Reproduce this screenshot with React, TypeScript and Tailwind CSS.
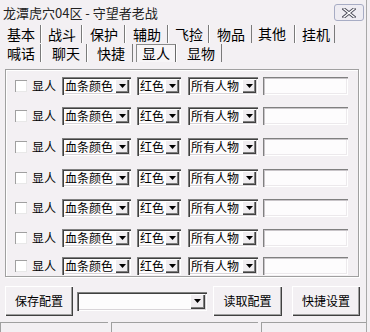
import React from "react";

const FONT = '"Noto Sans CJK SC", "Noto Sans", sans-serif';

function Arrow() {
  return (
    <svg width="7" height="4" viewBox="0 0 7 4">
      <path d="M0 0H7L3.5 4Z" fill="#000" />
    </svg>
  );
}

function Combo({ w, label }: { w: number; label: string }) {
  return (
    <div
      className="relative flex h-[18px] shrink-0 items-center bg-[#fdfcfd] shadow-[inset_1px_1px_0_#808080,inset_2px_2px_0_#404040,inset_-1px_-1px_0_#ffffff,inset_-2px_-2px_0_#d8d4d8]"
      style={{ width: w }}
    >
      <span className="pl-[3px] text-[12px] leading-[14px] text-black">{label}</span>
      <div className="absolute right-[2px] top-[2px] flex h-[14px] w-[14px] items-center justify-center bg-[#f0edf0] shadow-[inset_1px_1px_0_#ffffff,inset_-1px_-1px_0_#404040,inset_-2px_-2px_0_#808080]">
        <Arrow />
      </div>
    </div>
  );
}

function Row({ mt }: { mt: string }) {
  return (
    <div className={`flex h-[18px] items-center ${mt}`}>
      <div className="ml-[9px] h-[12px] w-[12px] shrink-0 bg-white shadow-[inset_1px_1px_0_#a0a0a0,inset_-1px_-1px_0_#e8e8e8]" />
      <span className="ml-[5px] w-[30px] text-[12px] leading-[14px] text-black">显人</span>
      <Combo w={69} label="血条颜色" />
      <div className="w-[6px]" />
      <Combo w={44} label="红色" />
      <div className="w-[7px]" />
      <Combo w={70} label="所有人物" />
      <div className="w-[5px]" />
      <div className="h-[18px] w-[85px] shrink-0 bg-[#fdfcfd] shadow-[inset_1px_1px_0_#808080,inset_2px_2px_0_#c8c4c8,inset_-1px_-1px_0_#ffffff,inset_-2px_-2px_0_#ece9ec]" />
    </div>
  );
}

function Tab({ label, w, pl, first }: { label: string; w: number; pl: number; first?: boolean }) {
  return (
    <div
      className={`flex h-full shrink-0 items-center border-r border-r-[#7a7a7a] text-[14px] leading-[16px] text-black ${first ? "" : "border-l border-l-white"}`}
      style={{ width: w, paddingLeft: pl }}
    >
      {label}
    </div>
  );
}

function Button({ label, w }: { label: string; w: number }) {
  return (
    <div
      className="flex h-[30px] shrink-0 items-center justify-center bg-[#f3f0f3] text-[12px] text-black shadow-[inset_1px_1px_0_#ffffff,inset_-1px_-1px_0_#404040,inset_-2px_-2px_0_#a0a0a0]"
      style={{ width: w }}
    >
      {label}
    </div>
  );
}

export default function App() {
  const rowMargins = ["mt-0", "mt-[12px]", "mt-[13px]", "mt-[13px]", "mt-[12px]", "mt-[12px]", "mt-[10px]"];
  return (
    <div
      className="relative h-[332px] w-[370px] overflow-hidden bg-[#f3f0f3]"
      style={{ fontFamily: FONT }}
    >
      <div className="flex h-[332px] w-[367px] flex-col border-r border-r-[#a8a8a8]">
        {/* Title bar */}
        <div className="flex h-[26px] items-center justify-between pl-[3px] pr-[2px]">
          <span className="text-[13px] leading-[16px] text-[#222]">龙潭虎穴04区 - 守望者老战</span>
          <div className="flex h-[17px] w-[30px] items-center justify-center rounded-[3px] border border-[#a7acc4] bg-[#eeecf2]">
            <svg width="14" height="10" viewBox="0 0 14 10">
              <path d="M2 1L12 9M12 1L2 9" stroke="#4a4a58" strokeWidth="3.2" strokeLinecap="square" />
              <path d="M2 1L12 9M12 1L2 9" stroke="#ffffff" strokeWidth="1.4" strokeLinecap="square" />
            </svg>
          </div>
        </div>
        {/* Tabs row 1 */}
        <div className="flex h-[18px] pl-[2px]">
          <Tab label="基本" w={39} pl={5} first />
          <Tab label="战斗" w={41} pl={6} />
          <Tab label="保护" w={43} pl={7} />
          <Tab label="辅助" w={43} pl={7} />
          <Tab label="飞捡" w={41} pl={6} />
          <Tab label="物品" w={43} pl={7} />
          <div className="flex h-full w-[43px] shrink-0 items-center border-r border-r-[#7a7a7a] pb-[2px] pl-[6px] text-[14px] leading-[16px] text-black">其他</div>
          <Tab label="挂机" w={40} pl={6} />
        </div>
        {/* Tabs row 2 */}
        <div className="mt-[1px] flex h-[18px] pl-[2px]">
          <Tab label="喊话" w={39} pl={5} first />
          <Tab label="聊天" w={46} pl={10} />
          <Tab label="快捷" w={46} pl={9} />
          <div className="ml-[3px] flex h-full w-[40px] shrink-0 items-center border-l border-t border-r border-l-[#8a8a8a] border-t-[#8a8a8a] border-r-[#6a6a6a] bg-[#f7f5f7] pl-[5px] text-[14px] leading-[16px] text-black">显人</div>
          <Tab label="显物" w={46} pl={10} />
        </div>
        {/* Group box */}
        <div className="ml-[5px] mt-[7px] flex h-[215px] w-[354px] flex-col border border-[#a0a0a0] pt-[7px] shadow-[1px_1px_0_#ffffff,inset_1px_1px_0_#ffffff]">
          {rowMargins.map((m, i) => (
            <Row key={i} mt={m} />
          ))}
        </div>
        {/* Bottom buttons */}
        <div className="mt-[9px] flex h-[30px] items-center pl-[5px]">
          <Button label="保存配置" w={68} />
          <div className="ml-[4px] flex h-[19px] w-[130px] items-center justify-end bg-[#fdfcfd] pr-[2px] shadow-[inset_1px_1px_0_#808080,inset_2px_2px_0_#404040,inset_-1px_-1px_0_#ffffff,inset_-2px_-2px_0_#d8d4d8]">
            <div className="flex h-[15px] w-[15px] items-center justify-center bg-[#f0edf0] shadow-[inset_1px_1px_0_#ffffff,inset_-1px_-1px_0_#404040,inset_-2px_-2px_0_#808080]">
              <Arrow />
            </div>
          </div>
          <div className="ml-[6px]">
            <Button label="读取配置" w={69} />
          </div>
          <div className="ml-[10px]">
            <Button label="快捷设置" w={68} />
          </div>
        </div>
        {/* Status bar */}
        <div className="mt-[6px] flex h-[10px] gap-[3px]">
          <div className="h-full w-[108px] border-l border-t border-[#a0a0a0]" />
          <div className="h-full w-[147px] border-l border-t border-[#a0a0a0]" />
          <div className="h-full flex-1 border-l border-t border-[#a0a0a0]" />
        </div>
      </div>
    </div>
  );
}
